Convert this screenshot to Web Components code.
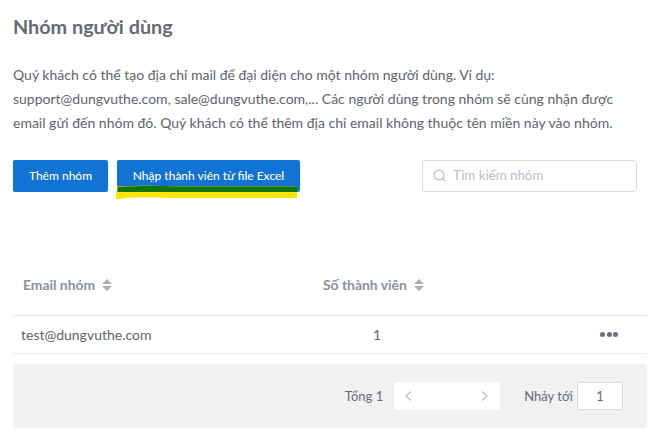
<!DOCTYPE html>
<html>
<head>
<meta charset="utf-8">
<style>
  html, body { margin: 0; padding: 0; background: #fff; }
  body { font-family: Lato, "Noto Sans", sans-serif; width: 655px; height: 435px; overflow: hidden; }
</style>
</head>
<body>
<group-page></group-page>
<script>
class AppButton extends HTMLElement {
  constructor() {
    super();
    this.attachShadow({ mode: 'open' }).innerHTML = `
      <style>
        :host {
          display: block;
          position: relative;
          height: 32px;
          background: #1173d4;
          border-radius: 2px;
          color: #fff;
          font-size: 12px;
          font-weight: 500;
          line-height: 32px;
          text-align: center;
        }
        svg { position: absolute; left: -2px; top: 25px; }
      </style>
      <slot></slot>
      ${this.hasAttribute('marked') ? `
      <svg width="186" height="14" viewBox="0 0 186 14">
        <path d="M1 14V6h1V1.500C20 .8 40 .4 60 1.500H182V13H50C35 12 15 12 5 14z" fill="#ffe600"/>
        <path d="M2.500 7V2C20 1 40 .6 60 1.500H182V7z" fill="#117500"/>
      </svg>` : ''}
    `;
  }
}
customElements.define('app-button', AppButton);

class SearchBox extends HTMLElement {
  constructor() {
    super();
    this.attachShadow({ mode: 'open' }).innerHTML = `
      <style>
        :host {
          display: flex;
          align-items: center;
          gap: 7px;
          box-sizing: border-box;
          width: 215px;
          height: 32px;
          padding: 0 0 2px 10px;
          border: 1px solid #d9dbe6;
          border-radius: 3px;
          color: #b9bdd0;
          font-size: 13.300px;
        }
        svg { display: block; }
      </style>
      <svg width="13" height="13" viewBox="0 0 13 13" fill="none" stroke="#b9bdd0" stroke-width="1.200">
        <circle cx="6" cy="6" r="4.900"/><path d="M9.500 9.500l2.500 2.500"/>
      </svg>
      <slot></slot>
    `;
  }
}
customElements.define('search-box', SearchBox);

class SortLabel extends HTMLElement {
  constructor() {
    super();
    this.attachShadow({ mode: 'open' }).innerHTML = `
      <style>
        :host {
          display: inline-flex;
          align-items: center;
          gap: 7px;
          color: #8b8fa3;
          font-size: 13.900px;
          font-weight: 700;
        }
        svg { display: block; }
      </style>
      <slot></slot>
      <svg width="10" height="12" viewBox="0 0 10 12" fill="#a9adc0">
        <path d="M5 0l5 5H0zM0 7h10l-5 5z"/>
      </svg>
    `;
  }
}
customElements.define('sort-label', SortLabel);

class GroupTable extends HTMLElement {
  constructor() {
    super();
    this.attachShadow({ mode: 'open' }).innerHTML = `
      <style>
        :host { display: block; margin-left: 13px; width: 634px; color: #5f6470; font-size: 14px; }
        .row { display: grid; grid-template-columns: 300px 128px 1fr; align-items: center; }
        .head { height: 60px; border-bottom: 1.500px solid #e3e4e9; box-sizing: border-box; padding-bottom: 2px; }
        .head sort-label { padding-left: 10px; }
        .body { height: 38px; border-bottom: 1px solid #e8e9f2; box-sizing: border-box; }
        .mail { padding-left: 8px; }
        .count { text-align: center; }
        .more { display: flex; justify-content: flex-end; gap: 1.500px; padding-right: 29px; }
        .more i { width: 5px; height: 5px; border-radius: 50%; background: #6c7080; }
      </style>
      <div class="row head">
        <sort-label>Email nhóm</sort-label>
        <sort-label>Số thành viên</sort-label>
      </div>
      <div class="row body">
        <div class="mail">test@dungvuthe.com</div>
        <div class="count">1</div>
        <div class="more"><i></i><i></i><i></i></div>
      </div>
    `;
  }
}
customElements.define('group-table', GroupTable);

class PagerBar extends HTMLElement {
  constructor() {
    super();
    this.attachShadow({ mode: 'open' }).innerHTML = `
      <style>
        :host {
          display: flex;
          align-items: center;
          justify-content: flex-end;
          box-sizing: border-box;
          margin: 10px 0 0 13px;
          width: 634px;
          height: 64px;
          padding-right: 24px;
          background: #f1f1f1;
          color: #676b78;
          font-size: 13px;
        }
        .arrows {
          display: flex;
          align-items: center;
          justify-content: space-between;
          box-sizing: border-box;
          width: 106px;
          height: 28px;
          margin: 0 24px 0 11px;
          padding: 0 12px 0 11px;
          background: #fff;
        }
        .jump {
          box-sizing: border-box;
          width: 46px;
          height: 28px;
          margin-left: 4px;
          border: 1px solid #d9dbe6;
          border-radius: 3px;
          background: #fff;
          line-height: 26px;
          text-align: center;
        }
        svg { display: block; }
      </style>
      <span>Tổng 1</span>
      <div class="arrows">
        <svg width="7" height="10" viewBox="0 0 7 10" fill="none" stroke="#bcc0cc" stroke-width="1.200"><path d="M6 .500L1 5l5 4.500"/></svg>
        <svg width="7" height="10" viewBox="0 0 7 10" fill="none" stroke="#bcc0cc" stroke-width="1.200"><path d="M1 .500L6 5 1 9.500"/></svg>
      </div>
      <span>Nhảy tới</span>
      <div class="jump">1</div>
    `;
  }
}
customElements.define('pager-bar', PagerBar);

class GroupPage extends HTMLElement {
  constructor() {
    super();
    this.attachShadow({ mode: 'open' }).innerHTML = `
      <style>
        :host { display: block; }
        h1 {
          margin: 0;
          padding: 13px 0 0 13px;
          height: 50px;
          box-sizing: border-box;
          color: #666a73;
          font-size: 19.800px;
          font-weight: 700;
          line-height: 27px;
        }
        p {
          margin: 13px 0 0 13px;
          width: 630px;
          color: #5f6470;
          font-size: 14px;
          line-height: 24px;
          height: 71px;
        }
        .actions {
          display: flex;
          margin: 26px 0 0 13px;
        }
        .actions app-button:first-child { width: 95px; margin-right: 9px; }
        .actions app-button:nth-child(2) { width: 183px; margin-right: 122px; }
        group-table { margin-top: 64px; }
      </style>
      <h1>Nhóm người dùng</h1>
      <p>Quý khách có thể tạo địa chỉ mail để đại diện cho một nhóm người dùng. Ví dụ:<br>support@dungvuthe.com, sale@dungvuthe.com,... Các người dùng trong nhóm sẽ cùng nhận được<br>email gửi đến nhóm đó. Quý khách có thể thêm địa chỉ email không thuộc tên miền này vào nhóm.</p>
      <div class="actions">
        <app-button>Thêm nhóm</app-button>
        <app-button marked>Nhập thành viên từ file Excel</app-button>
        <search-box>Tìm kiếm nhóm</search-box>
      </div>
      <group-table></group-table>
      <pager-bar></pager-bar>
    `;
  }
}
customElements.define('group-page', GroupPage);
</script>
</body>
</html>
